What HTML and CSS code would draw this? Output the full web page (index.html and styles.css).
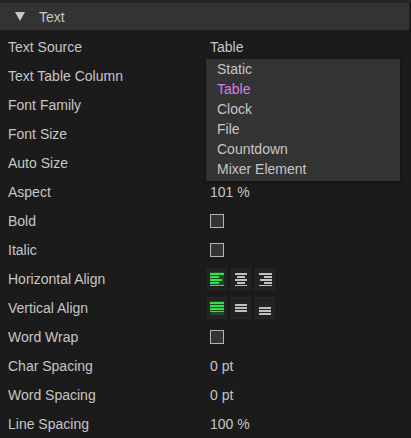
FILE: index.html
```html
<!DOCTYPE html>
<html>
<head>
<meta charset="utf-8">
<link rel="stylesheet" href="styles.css">
</head>
<body>
<div class="panel">
  <div class="header"><span class="arrow"></span><span class="title">Text</span></div>
  <div class="rows">
    <div class="label">Text Source</div><div class="value">Table</div>
    <div class="label">Text Table Column</div><div class="value"></div>
    <div class="label">Font Family</div><div class="value"></div>
    <div class="label">Font Size</div><div class="value"></div>
    <div class="label">Auto Size</div><div class="value"></div>
    <div class="label">Aspect</div><div class="value">101 %</div>
    <div class="label">Bold</div><div class="value"><span class="check"></span></div>
    <div class="label">Italic</div><div class="value"><span class="check"></span></div>
    <div class="label">Horizontal Align</div>
    <div class="value btns">
      <span class="btn on"><svg width="14" height="14" viewBox="0 0 14 14"><g fill="#2fe04a"><rect x="0" y="1" width="14" height="2"/><rect x="0" y="4" width="9" height="2"/><rect x="0" y="7" width="12" height="2"/><rect x="0" y="10" width="9" height="2"/><rect x="0" y="13" width="14" height="1"/></g></svg></span>
      <span class="btn"><svg width="14" height="14" viewBox="0 0 14 14"><g fill="#c0c0c0"><rect x="1" y="1" width="12" height="2"/><rect x="3" y="4" width="8" height="2"/><rect x="1" y="7" width="12" height="2"/><rect x="3" y="10" width="8" height="2"/><rect x="1" y="13" width="12" height="1"/></g></svg></span>
      <span class="btn"><svg width="14" height="14" viewBox="0 0 14 14"><g fill="#c0c0c0"><rect x="1" y="1" width="13" height="2"/><rect x="6" y="4" width="8" height="2"/><rect x="2" y="7" width="12" height="2"/><rect x="6" y="10" width="8" height="2"/><rect x="1" y="13" width="13" height="1"/></g></svg></span>
    </div>
    <div class="label">Vertical Align</div>
    <div class="value btns">
      <span class="btn on"><svg width="14" height="14" viewBox="0 0 14 14"><g fill="#2fe04a"><rect x="0" y="1" width="14" height="2"/><rect x="0" y="4" width="14" height="2"/><rect x="0" y="7" width="14" height="2"/><rect x="0" y="10" width="14" height="1"/></g></svg></span>
      <span class="btn"><svg width="14" height="14" viewBox="0 0 14 14"><g fill="#c0c0c0"><rect x="1" y="3" width="12" height="2"/><rect x="1" y="6" width="12" height="2"/><rect x="1" y="9" width="12" height="2"/></g></svg></span>
      <span class="btn"><svg width="14" height="14" viewBox="0 0 14 14"><g fill="#c0c0c0"><rect x="1" y="6" width="12" height="2"/><rect x="1" y="9" width="12" height="2"/><rect x="1" y="12" width="12" height="2"/></g></svg></span>
    </div>
    <div class="label">Word Wrap</div><div class="value"><span class="check"></span></div>
    <div class="label">Char Spacing</div><div class="value">0 pt</div>
    <div class="label">Word Spacing</div><div class="value">0 pt</div>
    <div class="label">Line Spacing</div><div class="value">100 %</div>
  </div>
  <ul class="menu">
    <li>Static</li>
    <li class="sel">Table</li>
    <li>Clock</li>
    <li>File</li>
    <li>Countdown</li>
    <li>Mixer Element</li>
  </ul>
</div>
</body>
</html>
```
FILE: styles.css
```css
html, body {
  margin: 0;
  padding: 0;
  background: #1b1b1b;
}
body {
  font-family: "Liberation Sans", Arial, sans-serif;
  font-size: 14px;
  color: #c6c6c6;
}
.panel {
  position: relative;
  width: 411px;
  height: 438px;
  overflow: hidden;
  border-top: 3px solid #262626;
  box-sizing: border-box;
}
.header {
  height: 27px;
  background: #333333;
  display: flex;
  align-items: center;
  margin-right: 2px;
}
.arrow {
  width: 0;
  height: 0;
  margin-left: 15px;
  border-left: 5px solid transparent;
  border-right: 5px solid transparent;
  border-top: 9px solid #c8c8c8;
}
.title {
  margin-left: 14px;
  color: #c8c8c8;
}
.rows {
  margin-top: 2px;
  display: grid;
  grid-template-columns: 202px 1fr;
  grid-auto-rows: 29px;
  padding-left: 8px;
}
.label, .value {
  display: flex;
  align-items: center;
}
.check {
  width: 12px;
  height: 12px;
  border: 1px solid #b4b4b4;
  background: #343434;
  display: block;
}
.btns {
  gap: 4px;
  margin-left: -3px;
}
.btn {
  width: 20px;
  height: 22px;
  background: #222222;
  border: 1px solid #272727;
  box-sizing: border-box;
  display: flex;
  align-items: center;
  justify-content: center;
}
.btn.on svg {
  background: #1d4a23;
}
.menu {
  position: absolute;
  left: 206px;
  top: 56px;
  width: 194px;
  margin: 0;
  padding: 0 0 2px 0;
  list-style: none;
  background: #333333;
  box-shadow: 0 1px 3px rgba(0,0,0,0.5);
}
.menu li {
  height: 20px;
  line-height: 20px;
  padding-left: 11px;
  color: #c6c6c6;
}
.menu li.sel {
  color: #d77ee4;
}
```
